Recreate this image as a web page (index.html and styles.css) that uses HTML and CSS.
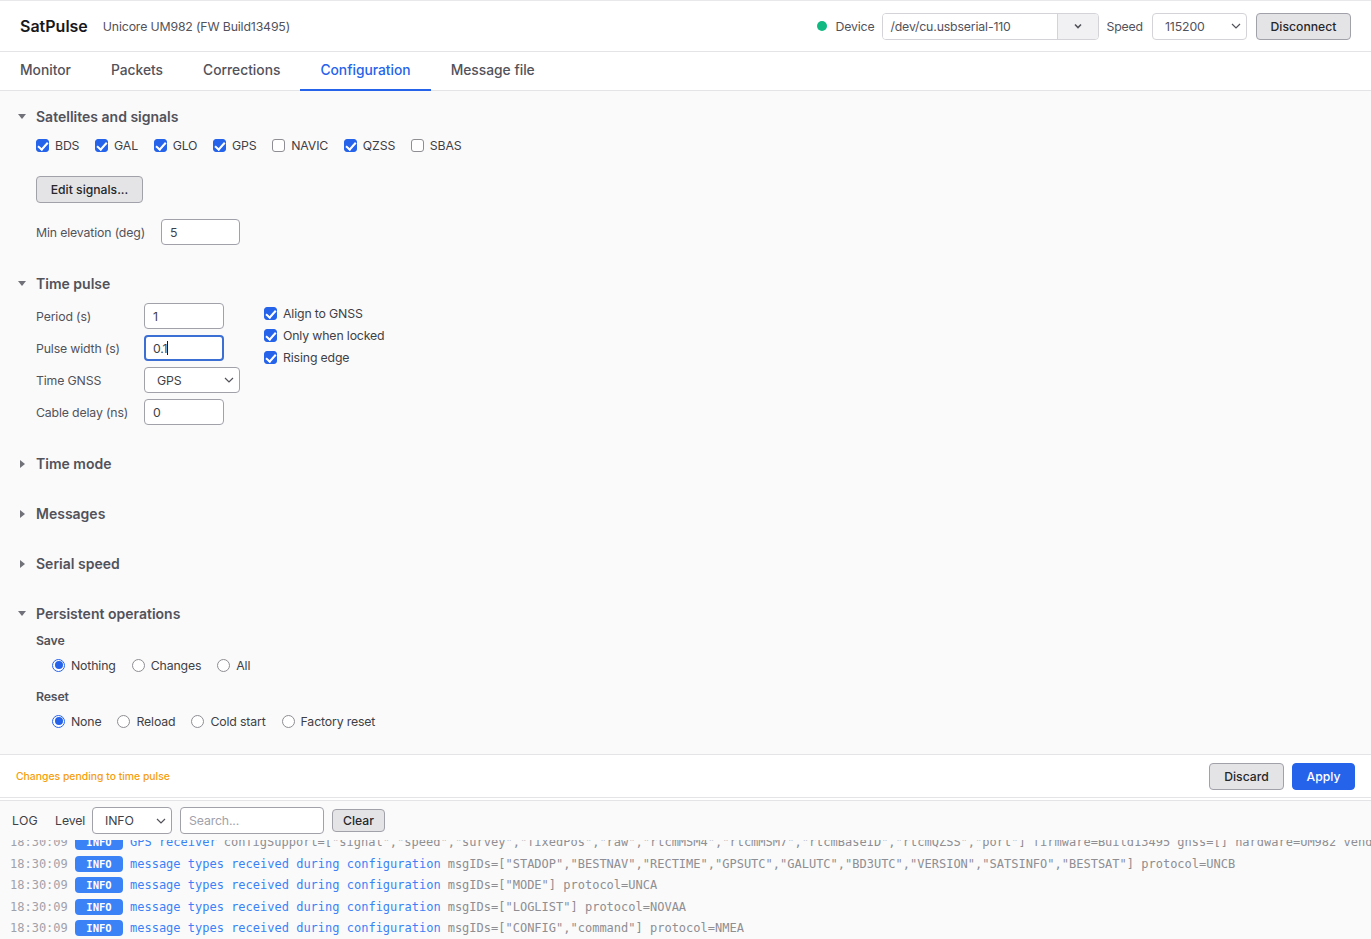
FILE: index.html
```html
<!DOCTYPE html>
<html lang="en">
<head>
    <meta charset="UTF-8">
    <title>SatPulse</title>
    <link rel="stylesheet" href="styles.css">
</head>
<body>
    <header class="topbar">
        <div class="brand">SatPulse</div>
        <div class="receiver">Unicore UM982 (FW Build13495)</div>
        <div class="connection">
            <span class="status-dot"></span>
            <span class="conn-label">Device</span>
            <div class="combo">
                <input class="combo-input" type="text" value="/dev/cu.usbserial-110">
                <span class="combo-arrow">
                    <svg width="10" height="10" viewBox="0 0 10 10"><path d="M2 3.5 L5 6.5 L8 3.5" fill="none" stroke="#52525b" stroke-width="1.6"/></svg>
                </span>
            </div>
            <span class="conn-label">Speed</span>
            <select class="select speed-select"><option>115200</option></select>
            <button class="btn disconnect">Disconnect</button>
        </div>
    </header>

    <nav class="tabs">
        <a class="tab">Monitor</a>
        <a class="tab">Packets</a>
        <a class="tab">Corrections</a>
        <a class="tab active">Configuration</a>
        <a class="tab">Message file</a>
    </nav>

    <main class="config">
        <details class="section" open>
            <summary>Satellites and signals</summary>
            <div class="check-row">
                <label class="check"><input type="checkbox" checked>BDS</label>
                <label class="check"><input type="checkbox" checked>GAL</label>
                <label class="check"><input type="checkbox" checked>GLO</label>
                <label class="check"><input type="checkbox" checked>GPS</label>
                <label class="check"><input type="checkbox">NAVIC</label>
                <label class="check"><input type="checkbox" checked>QZSS</label>
                <label class="check"><input type="checkbox">SBAS</label>
            </div>
            <button class="btn edit-signals">Edit signals...</button>
            <div class="elevation">
                <label class="field-label">Min elevation (deg)</label>
                <input class="text-input" type="text" value="5">
            </div>
        </details>

        <details class="section" open>
            <summary>Time pulse</summary>
            <div class="pulse">
                <div class="pulse-fields">
                    <label class="field-label">Period (s)</label>
                    <input class="text-input" type="text" value="1">
                    <label class="field-label">Pulse width (s)</label>
                    <div class="text-input focused">0.1<span class="caret"></span></div>
                    <label class="field-label">Time GNSS</label>
                    <select class="select gnss-select"><option>GPS</option></select>
                    <label class="field-label">Cable delay (ns)</label>
                    <input class="text-input" type="text" value="0">
                </div>
                <div class="pulse-checks">
                    <label class="check"><input type="checkbox" checked>Align to GNSS</label>
                    <label class="check"><input type="checkbox" checked>Only when locked</label>
                    <label class="check"><input type="checkbox" checked>Rising edge</label>
                </div>
            </div>
        </details>

        <details class="section"><summary>Time mode</summary></details>
        <details class="section"><summary>Messages</summary></details>
        <details class="section"><summary>Serial speed</summary></details>

        <details class="section" open>
            <summary>Persistent operations</summary>
            <div class="group-label">Save</div>
            <div class="radio-row">
                <label class="radio"><input type="radio" name="save" checked>Nothing</label>
                <label class="radio"><input type="radio" name="save">Changes</label>
                <label class="radio"><input type="radio" name="save">All</label>
            </div>
            <div class="group-label">Reset</div>
            <div class="radio-row">
                <label class="radio"><input type="radio" name="reset" checked>None</label>
                <label class="radio"><input type="radio" name="reset">Reload</label>
                <label class="radio"><input type="radio" name="reset">Cold start</label>
                <label class="radio"><input type="radio" name="reset">Factory reset</label>
            </div>
        </details>
    </main>

    <div class="apply-bar">
        <span class="pending">Changes pending to time pulse</span>
        <button class="btn discard">Discard</button>
        <button class="btn apply">Apply</button>
    </div>

    <section class="log-panel">
        <div class="log-tools">
            <span class="log-title">LOG</span>
            <span class="log-level">Level</span>
            <select class="select level-select"><option>INFO</option></select>
            <input class="text-input search" type="text" placeholder="Search...">
            <button class="btn clear">Clear</button>
        </div>
        <div class="log-lines">
            <div class="log-line"><span class="time">18:30:09</span><span class="badge">INFO</span><span class="msg">GPS receiver</span><span class="attrs">configSupport=["signal","speed","survey","fixedPos","raw","rtcmMSM4","rtcmMSM7","rtcmBaseID","rtcmQZSS","port"] firmware=Build13495 gnss=[] hardware=UM982 vendor=Unicore</span></div>
            <div class="log-line"><span class="time">18:30:09</span><span class="badge">INFO</span><span class="msg">message types received during configuration</span><span class="attrs">msgIDs=["STADOP","BESTNAV","RECTIME","GPSUTC","GALUTC","BD3UTC","VERSION","SATSINFO","BESTSAT"] protocol=UNCB</span></div>
            <div class="log-line"><span class="time">18:30:09</span><span class="badge">INFO</span><span class="msg">message types received during configuration</span><span class="attrs">msgIDs=["MODE"] protocol=UNCA</span></div>
            <div class="log-line"><span class="time">18:30:09</span><span class="badge">INFO</span><span class="msg">message types received during configuration</span><span class="attrs">msgIDs=["LOGLIST"] protocol=NOVAA</span></div>
            <div class="log-line"><span class="time">18:30:09</span><span class="badge">INFO</span><span class="msg">message types received during configuration</span><span class="attrs">msgIDs=["CONFIG","command"] protocol=NMEA</span></div>
        </div>
    </section>
</body>
</html>
```

FILE: styles.css
```css
* {
    box-sizing: border-box;
}

html, body {
    height: 100%;
}

body {
    margin: 0;
    display: flex;
    flex-direction: column;
    height: 100vh;
    overflow: hidden;
    background: #fff;
    color: #3f3f46;
    font-family: Inter, 'Liberation Sans', sans-serif;
    font-size: 12.3px;
    letter-spacing: -0.15px;
}

.topbar {
    display: flex;
    align-items: center;
    height: 52px;
    flex: none;
    padding: 0 20px;
    border-top: 1px solid #e8e8ea;
    border-bottom: 1px solid #e4e4e7;
}

.brand {
    font-size: 16px;
    font-weight: 600;
    letter-spacing: normal;
    color: #18181b;
}

.receiver {
    margin-left: 15px;
    color: #52525b;
}

.connection {
    display: flex;
    align-items: center;
    margin-left: auto;
}

.status-dot {
    width: 10px;
    height: 10px;
    border-radius: 50%;
    background: #10b981;
    margin-right: 8px;
}

.conn-label {
    color: #52525b;
}

.combo {
    display: flex;
    width: 217px;
    height: 27px;
    margin: 0 7px 0 8px;
    border: 1px solid #d4d4d8;
    border-radius: 4px;
    overflow: hidden;
}

.combo-input {
    flex: 1;
    min-width: 0;
    border: 0;
    padding: 0 7px;
    color: #52525b;
    font: inherit;
    letter-spacing: inherit;
    outline: none;
}

.combo-arrow {
    display: flex;
    align-items: center;
    justify-content: center;
    width: 41px;
    background: #f1f1f3;
    border-left: 1px solid #d4d4d8;
}

.select {
    appearance: none;
    height: 26px;
    padding: 0 12px;
    border: 1px solid #a1a1aa;
    border-radius: 4px;
    background: #fff url("data:image/svg+xml,%3Csvg xmlns='http://www.w3.org/2000/svg' width='12' height='12'%3E%3Cpath d='M2 4l4 4 4-4' fill='none' stroke='%2352525b' stroke-width='1.2'/%3E%3C/svg%3E") no-repeat right 4px center;
    color: #3f3f46;
    font: inherit;
    letter-spacing: inherit;
}

.speed-select {
    width: 95px;
    height: 27px;
    margin-left: 9px;
    border-color: #d4d4d8;
    color: #52525b;
}

.btn {
    height: 27px;
    padding: 0 14px;
    border: 1px solid #a1a1aa;
    border-radius: 4px;
    background: #e4e4e7;
    color: #27272a;
    font: inherit;
    font-size: 12.2px;
    font-weight: 500;
}

.disconnect {
    width: 95px;
    margin-left: 9px;
    padding: 0;
}

.tabs {
    display: flex;
    flex: none;
    height: 39px;
    border-bottom: 1px solid #e4e4e7;
}

.tab {
    display: flex;
    align-items: center;
    padding: 0 20px 3px;
    color: #52525b;
    font-size: 13.8px;
    font-weight: 500;
    letter-spacing: normal;
}

.tab.active {
    color: #2563eb;
    padding-bottom: 1px;
    border-bottom: 2px solid #2563eb;
    margin-bottom: -1px;
}

.config {
    flex: 1;
    min-height: 0;
    padding: 14px 16px 0;
    background: #fafafa;
    overflow: hidden;
}

.section {
    margin-bottom: 27px;
}

summary {
    display: flex;
    align-items: center;
    height: 23px;
    list-style: none;
    color: #52525b;
    font-size: 14px;
    font-weight: 600;
    letter-spacing: normal;
}

summary::before {
    content: "";
    width: 0;
    height: 0;
    border-top: 4px solid transparent;
    border-bottom: 4px solid transparent;
    border-left: 5px solid #71717a;
    margin-left: 4px;
    margin-right: 11px;
}

.section[open] > summary::before {
    border-left: 4px solid transparent;
    border-right: 4px solid transparent;
    border-top: 5px solid #71717a;
    border-bottom: 0;
    margin-left: 2px;
    margin-right: 10px;
}

.check-row {
    display: flex;
    gap: 15.7px;
    margin: 8px 0 0 20px;
}

.check, .radio {
    display: flex;
    align-items: center;
    gap: 6px;
    height: 18px;
    color: #3f3f46;
}

input[type="checkbox"], input[type="radio"] {
    appearance: none;
    flex: none;
    position: relative;
    width: 13px;
    height: 13px;
    margin: 0;
    background: #fff;
    border: 1px solid #8e8e93;
}

input[type="checkbox"] {
    border-radius: 3px;
}

input[type="checkbox"]:checked {
    background: #2563eb;
    border-color: #2563eb;
}

input[type="checkbox"]:checked::after {
    content: "";
    position: absolute;
    left: 3px;
    top: 0;
    width: 3.5px;
    height: 8px;
    border: solid #fff;
    border-width: 0 2px 2px 0;
    transform: rotate(42deg);
}

input[type="radio"] {
    border-radius: 50%;
}

input[type="radio"]:checked {
    border-color: #2563eb;
}

input[type="radio"]:checked::after {
    content: "";
    position: absolute;
    left: 1.5px;
    top: 1.5px;
    width: 8px;
    height: 8px;
    border-radius: 50%;
    background: #2563eb;
}

.edit-signals {
    display: block;
    width: 107px;
    margin: 22px 0 0 20px;
    padding: 0;
}

.elevation {
    display: flex;
    align-items: center;
    gap: 16px;
    margin: 16px 0 0 20px;
}

.field-label {
    color: #52525b;
}

.text-input {
    width: 80px;
    height: 26px;
    padding: 0 8px;
    border: 1px solid #a1a1aa;
    border-radius: 4px;
    background: #fff;
    color: #3f3f46;
    font: inherit;
    letter-spacing: inherit;
}

.elevation .text-input {
    width: 79px;
}

.text-input.focused {
    display: flex;
    align-items: center;
    border: 2px solid #3b6fd4;
    padding: 0 7px;
}

.caret {
    width: 1px;
    height: 14px;
    background: #18181b;
}

.pulse {
    display: flex;
    align-items: flex-start;
    gap: 24px;
    margin: 8px 0 0 20px;
}

.pulse-fields {
    display: grid;
    grid-template-columns: 108px auto;
    justify-items: start;
    align-items: center;
    row-gap: 6px;
}

.gnss-select {
    width: 96px;
}

.pulse-checks {
    display: flex;
    flex-direction: column;
    gap: 4px;
    margin-top: 1px;
}

.group-label {
    margin: 8px 0 0 20px;
    height: 16px;
    line-height: 16px;
    font-weight: 600;
    color: #52525b;
}

.radio-row {
    display: flex;
    gap: 16px;
    margin: 7px 0 0 36px;
}

.radio-row + .group-label {
    margin-top: 15px;
}

.apply-bar {
    display: flex;
    align-items: center;
    flex: none;
    height: 44px;
    padding: 0 16px;
    border-top: 1px solid #e4e4e7;
    border-bottom: 1px solid #e4e4e7;
}

.pending {
    margin-right: auto;
    color: #f59e0b;
    font-size: 10.4px;
    font-weight: 500;
    letter-spacing: normal;
}

.discard {
    width: 75px;
    padding: 0;
}

.apply {
    width: 63px;
    margin-left: 8px;
    padding: 0;
    border-color: #2563eb;
    background: #2563eb;
    color: #fff;
}

.log-panel {
    flex: none;
    height: 139px;
    margin-top: 2px;
    background: #fafafa;
    border-top: 1px solid #e4e4e7;
    display: flex;
    flex-direction: column;
}

.log-tools {
    display: flex;
    align-items: center;
    flex: none;
    height: 39px;
    padding: 0 12px;
    background: #fafafa;
}

.log-title {
    letter-spacing: 0.3px;
}

.log-level {
    margin: 0 7px 0 17px;
}

.level-select {
    width: 80px;
    height: 27px;
}

.search {
    width: 144px;
    height: 27px;
    margin-left: 8px;
}

.search::placeholder {
    color: #a1a1aa;
}

.clear {
    width: 53px;
    height: 23px;
    margin-left: 8px;
    padding: 0;
}

.log-lines {
    flex: 1;
    min-height: 0;
    display: flex;
    flex-direction: column;
    justify-content: flex-end;
    overflow: hidden;
    padding: 0 0 0 10px;
    font-family: 'DejaVu Sans Mono', monospace;
    font-size: 12px;
    letter-spacing: normal;
}

.log-line {
    display: flex;
    align-items: center;
    flex: none;
    height: 21.5px;
    white-space: pre;
}

.log-line span {
    flex: none;
}

.time {
    width: 65px;
    color: #a1a1aa;
}

.badge {
    width: 48px;
    height: 16px;
    margin-right: 7px;
    border-radius: 4px;
    background: #3b82f6;
    color: #fff;
    font-size: 10.5px;
    font-weight: 700;
    line-height: 16px;
    text-align: center;
}

.msg {
    color: #3b82f6;
}

.attrs {
    margin-left: 7px;
    color: #8e8e93;
}
```
